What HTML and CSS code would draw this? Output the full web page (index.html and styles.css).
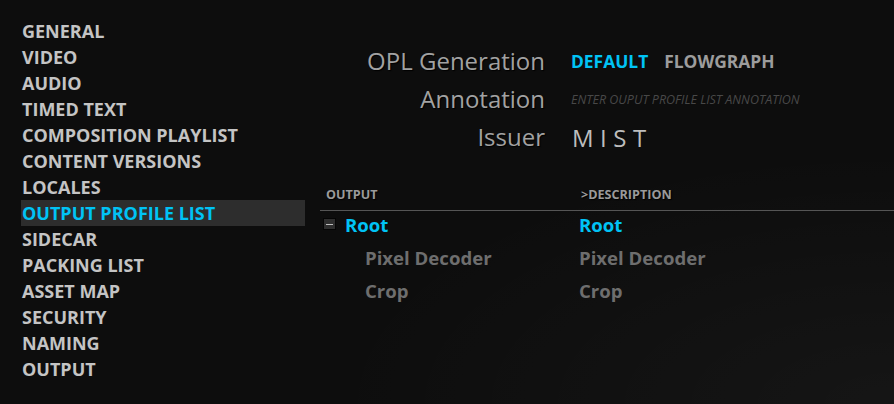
FILE: index.html
```html
<!DOCTYPE html>
<html lang="en">
<head>
<meta charset="UTF-8">
<meta name="viewport" content="width=device-width, initial-scale=1.0">
<title>Output Profile List</title>
<link rel="stylesheet" href="styles.css">
</head>
<body>
<nav class="sidebar">
    <a class="nav-item">GENERAL</a>
    <a class="nav-item">VIDEO</a>
    <a class="nav-item">AUDIO</a>
    <a class="nav-item">TIMED TEXT</a>
    <a class="nav-item">COMPOSITION PLAYLIST</a>
    <a class="nav-item">CONTENT VERSIONS</a>
    <a class="nav-item">LOCALES</a>
    <a class="nav-item active">OUTPUT PROFILE LIST</a>
    <a class="nav-item">SIDECAR</a>
    <a class="nav-item">PACKING LIST</a>
    <a class="nav-item">ASSET MAP</a>
    <a class="nav-item">SECURITY</a>
    <a class="nav-item">NAMING</a>
    <a class="nav-item">OUTPUT</a>
</nav>

<main class="content">
    <div class="settings">
        <div class="label">OPL Generation</div>
        <div class="value toggles">
            <span class="toggle selected">DEFAULT</span>
            <span class="toggle">FLOWGRAPH</span>
        </div>

        <div class="label">Annotation</div>
        <div class="value">
            <input type="text" class="annotation" placeholder="ENTER OUPUT PROFILE LIST ANNOTATION">
        </div>

        <div class="label">Issuer</div>
        <div class="value issuer">MIST</div>
    </div>

    <div class="tree">
        <div class="tree-head">
            <div class="col-output">OUTPUT</div>
            <div class="col-desc">&gt;DESCRIPTION</div>
        </div>
        <div class="tree-row root">
            <div class="col-output"><span class="collapse"></span>Root</div>
            <div class="col-desc">Root</div>
        </div>
        <div class="tree-row child">
            <div class="col-output">Pixel Decoder</div>
            <div class="col-desc">Pixel Decoder</div>
        </div>
        <div class="tree-row child">
            <div class="col-output">Crop</div>
            <div class="col-desc">Crop</div>
        </div>
    </div>
</main>
</body>
</html>
```

FILE: styles.css
```css
* {
    box-sizing: border-box;
}

body {
    margin: 0;
    padding: 0;
    height: 404px;
    overflow: hidden;
    display: flex;
    font-family: "Open Sans", "Noto Sans", sans-serif;
    background-color: #0d0d0d;
    background-image: radial-gradient(ellipse at 100% 100%, rgba(255, 255, 255, 0.035), rgba(255, 255, 255, 0) 45%);
}

.sidebar {
    width: 305px;
    padding: 18px 0 0 21px;
    display: flex;
    flex-direction: column;
}

.nav-item {
    height: 26px;
    line-height: 26px;
    padding-left: 1px;
    font-size: 18px;
    font-weight: 700;
    color: #c4c4c4;
    white-space: nowrap;
    cursor: pointer;
}

.nav-item.active {
    background-color: #2d2d2d;
    color: #00c3f5;
}

.content {
    flex: 1;
    margin-left: 15px;
}

.settings {
    display: grid;
    grid-template-columns: 225px 1fr;
    column-gap: 26px;
    grid-auto-rows: 38px;
    margin-top: 42px;
}

.label {
    text-align: right;
    font-size: 24px;
    line-height: 38px;
    color: #a2a2a2;
    text-shadow: 1px 1px 1px #000;
    white-space: nowrap;
}

.value {
    display: flex;
    align-items: center;
}

.toggles {
    gap: 16px;
}

.toggle {
    font-size: 17.4px;
    font-weight: 700;
    color: #9c9c9c;
    cursor: pointer;
}

.toggle.selected {
    color: #00c3f5;
}

.annotation {
    width: 320px;
    padding: 0;
    border: none;
    outline: none;
    background: transparent;
    font-family: "Open Sans", "Noto Sans", sans-serif;
    font-size: 12.5px;
    font-style: italic;
    color: #bbb;
}

.annotation::placeholder {
    color: #484848;
}

.issuer {
    font-size: 24px;
    letter-spacing: 6.5px;
    color: #bdbdbd;
    padding-left: 1px;
}

.tree {
    margin-top: 23px;
}

.tree-head {
    display: flex;
    height: 32px;
    align-items: center;
    border-bottom: 1px solid #555;
    font-size: 12.6px;
    font-weight: 700;
    color: #9a9a9a;
    text-shadow: 1px 1px 1px #000;
}

.tree-head .col-output {
    padding-left: 6px;
}

.tree-head .col-desc {
    padding-left: 2px;
}

.col-output {
    width: 259px;
    display: flex;
    align-items: center;
}

.col-desc {
    flex: 1;
}

.tree-row {
    display: flex;
    height: 33px;
    padding-bottom: 7px;
    align-items: center;
    font-size: 18.6px;
    font-weight: 700;
}

.tree-row.root {
    color: #00c3f5;
}

.tree-row.child {
    color: #6e6e6e;
}

.tree-row.child .col-output {
    padding-left: 45px;
}

.collapse {
    position: relative;
    width: 13px;
    height: 12px;
    margin: 0 9px 0 3px;
    background-color: #2e2e2e;
    border: 1px solid #050505;
}

.collapse::after {
    content: "";
    position: absolute;
    left: 2px;
    right: 2px;
    top: 5px;
    height: 1px;
    background-color: #bdbdbd;
}
```
